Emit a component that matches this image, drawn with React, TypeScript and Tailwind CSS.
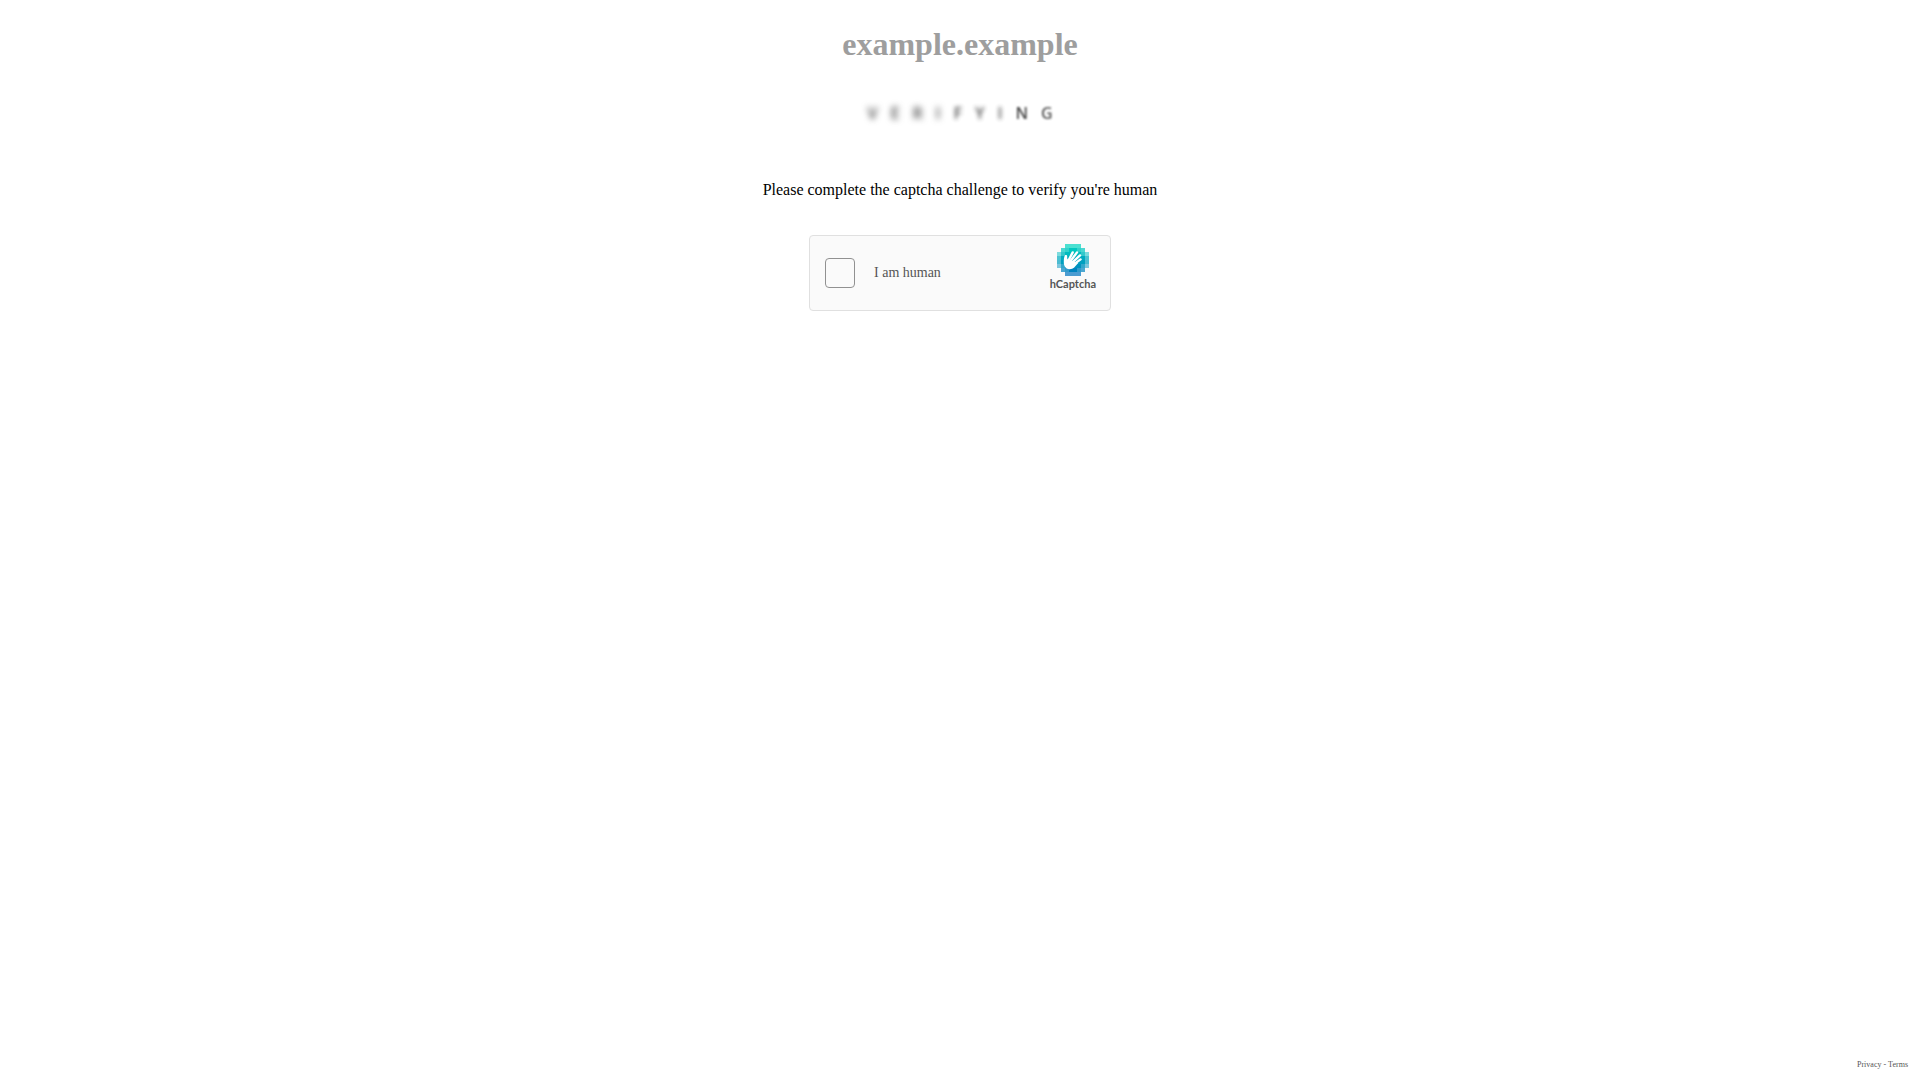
const rows: { y: number; color: string; opacities: number[] }[] = [
  { y: 0, color: "#00D4BF", opacities: [0, 0, 0.7, 0.7, 0.7, 0.7, 0, 0] },
  { y: 4, color: "#00C8BF", opacities: [0, 0.7, 0.8, 1, 1, 0.8, 0.7, 0] },
  { y: 8, color: "#00BBBF", opacities: [0.5, 0.8, 1, 1, 1, 1, 0.8, 0.5] },
  { y: 12, color: "#00ABBF", opacities: [0.7, 1, 1, 1, 1, 1, 1, 0.7] },
  { y: 16, color: "#009FBF", opacities: [0.7, 1, 1, 1, 1, 1, 1, 0.7] },
  { y: 20, color: "#0092BF", opacities: [0.5, 0.8, 1, 1, 1, 1, 0.8, 0.5] },
  { y: 24, color: "#0083BF", opacities: [0, 0.7, 0.8, 1, 1, 0.8, 0.7, 0] },
  { y: 28, color: "#0074BF", opacities: [0, 0, 0.7, 0.7, 0.7, 0.7, 0, 0] },
];

const letters: { char: string; style: string }[] = [
  { char: "V", style: "blur-[3px]" },
  { char: "E", style: "blur-[3px]" },
  { char: "R", style: "blur-[3px]" },
  { char: "I", style: "blur-[3px]" },
  { char: "F", style: "blur-[2px] opacity-90" },
  { char: "Y", style: "blur-[2px] opacity-90" },
  { char: "I", style: "blur-[2px] opacity-90" },
  { char: "N", style: "blur-[1px]" },
  { char: "G", style: "blur-[1px] opacity-90" },
];

function CaptchaLogo() {
  return (
    <svg viewBox="0 0 32 32" className="size-8" shapeRendering="crispEdges" aria-hidden="true">
      {rows.map((row) =>
        row.opacities.map((opacity, column) =>
          opacity > 0 ? (
            <rect key={`${row.y}-${column}`} x={column * 4} y={row.y} width="4" height="4" fill={row.color} fillOpacity={opacity} />
          ) : null,
        ),
      )}
      <g shapeRendering="geometricPrecision" fill="#fff">
        <path d="M8 11.2c1-.7 2.200-.1 2.200 1v2.300l1 1.500 10 3-4 4.600c-1.800 1.500-3.900 2-5.800 1.500-3-.6-4.600-3.400-4.600-6.800 0-2.600.1-5.400 1.200-7.100z" />
        <g stroke="#fff" strokeWidth="2.400" strokeLinecap="round">
          <path d="M11 17.500L15.700 8.400" />
          <path d="M13 17.800L20 8.400" />
          <path d="M15.200 18.600L23 11.400" />
          <path d="M16.500 20.500L23.600 15.400" />
        </g>
      </g>
    </svg>
  );
}

export default function App() {
  return (
    <div className="flex min-h-screen flex-col bg-white font-['Liberation_Serif',serif] text-black">
      <main className="flex flex-1 flex-col items-center pt-6">
        <h1 className="text-[32px] leading-10 font-bold text-[#9e9e9e]">example.example</h1>
        <p className="mt-[37px] flex gap-[13px] font-['Open_Sans',sans-serif] text-base leading-6 font-semibold text-[#444]">
          {letters.map((letter, index) => (
            <span key={index} className={letter.style}>
              {letter.char}
            </span>
          ))}
        </p>
        <p className="mt-[55px] text-base leading-5">Please complete the captcha challenge to verify you're human</p>
        <section className="mt-[35px] flex h-[76px] w-[302px] rounded border border-[#e0e0e0] bg-[#fafafa] pr-[14px] pl-[15px]">
          <label className="flex flex-1 items-center gap-[19px] text-sm text-[#555]">
            <input type="checkbox" className="size-[30px] appearance-none rounded border border-[#919191] bg-[#fafafa]" />
            I am human
          </label>
          <div className="flex flex-col items-center pt-2">
            <CaptchaLogo />
            <span className="font-[Lato,sans-serif] text-[11px] leading-4 font-bold text-[#555]">hCaptcha</span>
          </div>
        </section>
      </main>
      <footer className="flex justify-end gap-[2px] pr-3 pb-[9px] text-[8px] leading-3 text-[#555]">
        <a href="#privacy">Privacy</a>
        <span>-</span>
        <a href="#terms">Terms</a>
      </footer>
    </div>
  );
}
